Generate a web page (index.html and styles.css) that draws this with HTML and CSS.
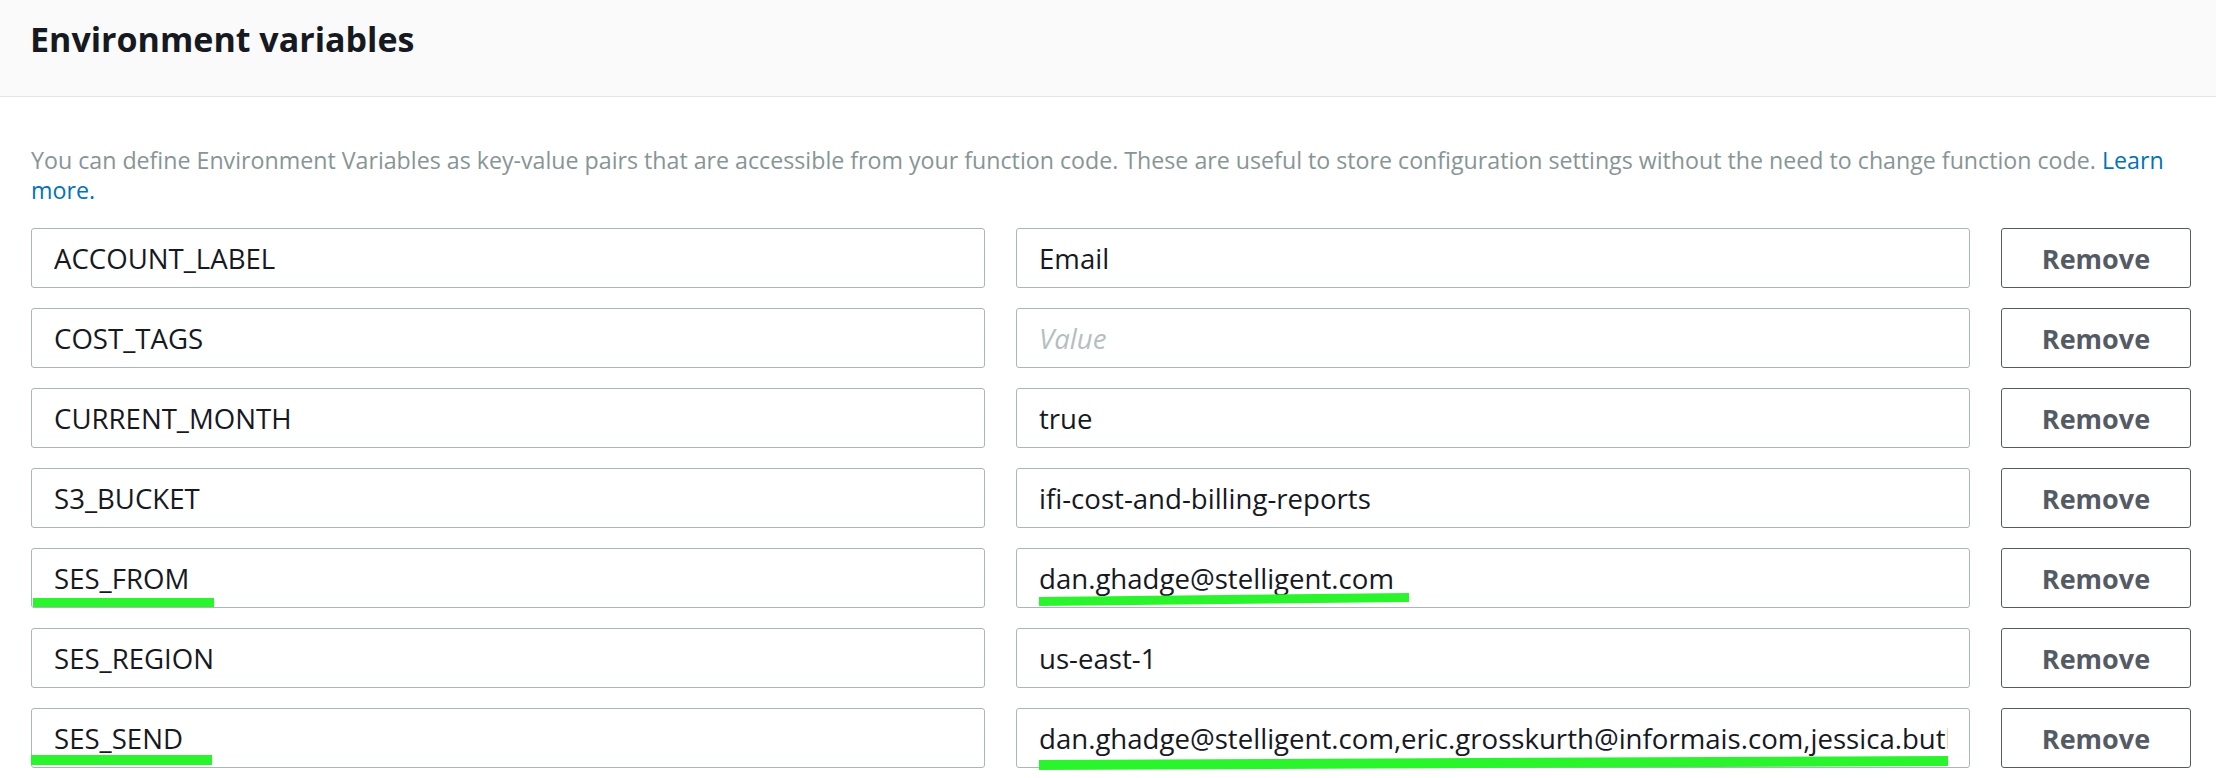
FILE: index.html
```html
<!DOCTYPE html>
<html lang="en">
<head>
<meta charset="utf-8">
<title>Environment variables</title>
<link rel="stylesheet" href="styles.css">
</head>
<body>
<section class="panel">
  <header class="panel-header">
    <h2 class="panel-title">Environment variables</h2>
  </header>
  <div class="panel-body">
    <p class="desc">You can define Environment Variables as key-value pairs that are accessible from your function code. These are useful to store configuration settings without the need to change function code. <a class="link" href="#">Learn more.</a></p>
    <div class="rows">
      <div class="field"><span class="text">ACCOUNT_LABEL</span></div>
      <div class="field"><span class="text">Email</span></div>
      <button class="btn">Remove</button>

      <div class="field"><span class="text">COST_TAGS</span></div>
      <div class="field"><span class="text placeholder">Value</span></div>
      <button class="btn">Remove</button>

      <div class="field"><span class="text">CURRENT_MONTH</span></div>
      <div class="field"><span class="text">true</span></div>
      <button class="btn">Remove</button>

      <div class="field"><span class="text">S3_BUCKET</span></div>
      <div class="field"><span class="text">ifi-cost-and-billing-reports</span></div>
      <button class="btn">Remove</button>

      <div class="field"><span class="text">SES_FROM</span><i class="mark mark-k1"></i></div>
      <div class="field"><span class="text">dan.ghadge@stelligent.com</span><i class="mark mark-v1"></i></div>
      <button class="btn">Remove</button>

      <div class="field"><span class="text">SES_REGION</span></div>
      <div class="field"><span class="text">us-east-1</span></div>
      <button class="btn">Remove</button>

      <div class="field"><span class="text">SES_SEND</span><i class="mark mark-k2"></i></div>
      <div class="field"><span class="text">dan.ghadge@stelligent.com,eric.grosskurth@informais.com,jessica.butler@stelligent.com</span><i class="mark mark-v2"></i></div>
      <button class="btn">Remove</button>
    </div>
  </div>
</section>
</body>
</html>
```

FILE: styles.css
```css
html, body {
  margin: 0;
  padding: 0;
  background: #ffffff;
}
body {
  font-family: "Open Sans", "Noto Sans", sans-serif;
  color: #16191f;
  width: 2216px;
  height: 778px;
  overflow: hidden;
}
.panel-header {
  height: 96px;
  background: #fafafa;
  border-bottom: 1px solid #e4e7e7;
  display: flex;
  align-items: center;
  padding: 0 30px;
}
.panel-title {
  margin: 0;
  font-size: 34px;
  font-weight: 700;
  line-height: 1;
  color: #16191f;
  position: relative;
  top: -9px;
}
.panel-body {
  padding: 48px 25px 0 31px;
}
.desc {
  margin: 0 0 23px 0;
  font-size: 23.2px;
  line-height: 30px;
  color: #879596;
}
.link {
  color: #0073bb;
  text-decoration: none;
}
.rows {
  display: grid;
  grid-template-columns: minmax(0, 1fr) minmax(0, 1fr) 190px;
  column-gap: 31px;
  row-gap: 20px;
}
.field {
  position: relative;
  height: 60px;
  min-width: 0;
  box-sizing: border-box;
  border: 1px solid #aab7b8;
  border-radius: 3px;
  display: flex;
  align-items: center;
  padding: 0 21px 0 22px;
  font-size: 27.6px;
}
.text {
  flex: 1;
  min-width: 0;
  white-space: nowrap;
  overflow: hidden;
  color: #16191f;
}
.placeholder {
  color: #b4bfc0;
  font-style: italic;
}
.btn {
  height: 60px;
  box-sizing: border-box;
  border: 1px solid #545b64;
  border-radius: 3px;
  background: #ffffff;
  color: #545b64;
  font-family: "Open Sans", "Noto Sans", sans-serif;
  font-weight: 700;
  font-size: 27px;
  padding: 0;
}
.mark {
  position: absolute;
  background: #2af52c;
  display: block;
}
.mark-k1 {
  left: 1px;
  width: 181px;
  top: 49px;
  height: 9px;
}
.mark-k2 {
  left: -1px;
  width: 181px;
  top: 46px;
  height: 10px;
}
.mark-v1 {
  left: 22px;
  width: 370px;
  top: 46px;
  height: 9px;
  transform: rotate(-0.6deg);
}
.mark-v2 {
  left: 22px;
  width: 909px;
  top: 49px;
  height: 10px;
  transform: rotate(-0.25deg);
}
```
